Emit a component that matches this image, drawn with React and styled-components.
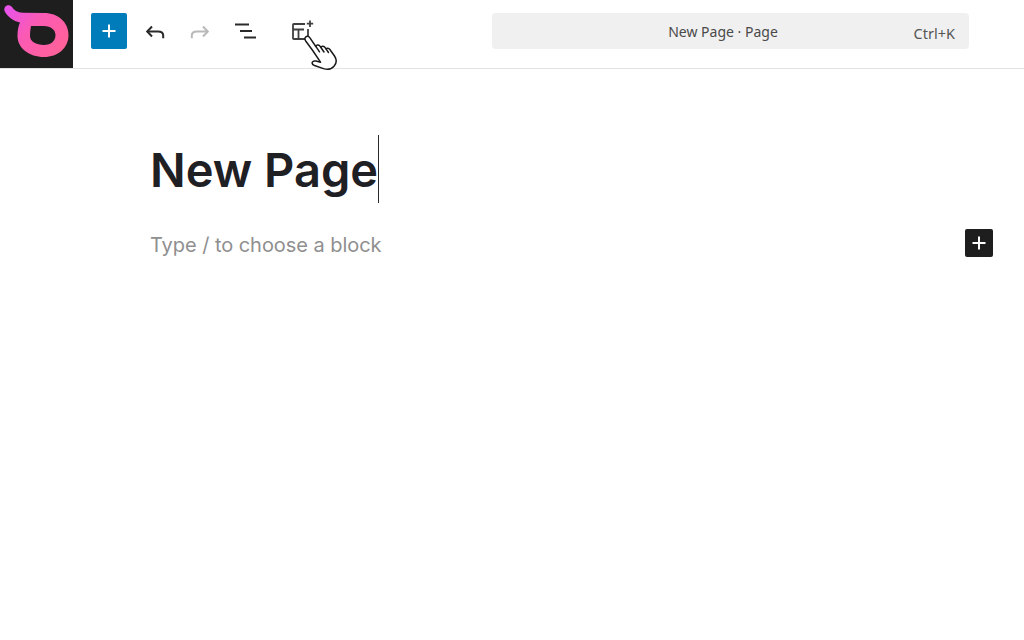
import React from 'react';
import styled, {createGlobalStyle} from 'styled-components';

const GlobalStyle = createGlobalStyle`
  html, body {
    margin: 0;
    padding: 0;
    background: #fff;
    font-family: "Inter", "Liberation Sans", sans-serif;
  }
`

const Page = styled.div`
  position: relative;
  width: 1024px;
  height: 640px;
  overflow: hidden;
  background: #fff;
`

const Toolbar = styled.header`
  display: flex;
  height: 68px;
  border-bottom: 1px solid #e2e2e2;
`

const LogoBox = styled.div`
  width: 73px;
  height: 68px;
  flex: none;
  background: #1e1e1e;
`

const Controls = styled.div`
  display: flex;
  align-items: flex-start;
  padding-top: 13px;
`

const AddButton = styled.button`
  display: flex;
  align-items: center;
  justify-content: center;
  flex: none;
  width: 36px;
  height: 36px;
  margin: 0 5px 0 18px;
  padding: 0;
  border: 0;
  border-radius: 2px;
  background: #007cba;
  color: #fff;
`

const ToolButton = styled.button`
  display: flex;
  align-items: center;
  justify-content: center;
  flex: none;
  width: 45px;
  height: 36px;
  padding: 0;
  border: 0;
  background: transparent;
  color: ${({disabled}) => disabled ? '#b9b9b9' : '#2a2a2a'};
`

const PatternButton = styled(ToolButton)`
  margin-left: 12px;
`

const Search = styled.div`
  position: relative;
  display: flex;
  align-items: center;
  justify-content: center;
  box-sizing: border-box;
  width: 477px;
  height: 36px;
  margin-left: 168px;
  padding-right: 15px;
  border-radius: 4px;
  background: #f0f0f0;
  font-family: "Noto Sans", sans-serif;
  font-size: 14px;
  color: #4a4a4a;
`

const Shortcut = styled.span`
  position: absolute;
  right: 14px;
  top: 10px;
  line-height: 20px;
  font-size: 14.500px;
  color: #555;
`

const Editor = styled.main`
  display: flex;
  flex-direction: column;
  align-items: flex-start;
  padding: 66px 31px 0 150px;
`

const Title = styled.h1`
  display: flex;
  margin: 0;
  height: 68px;
  font-size: 47px;
  line-height: 70px;
  font-weight: 600;
  color: #1f2024;
`

const Caret = styled.span`
  width: 1px;
  height: 68px;
  background: #2a2a2a;
`

const BlockRow = styled.div`
  display: flex;
  align-items: flex-start;
  justify-content: space-between;
  align-self: stretch;
  margin-top: 26px;
  height: 30px;
`

const Placeholder = styled.p`
  margin: 0;
  padding-top: 2px;
  font-size: 20px;
  line-height: 28px;
  letter-spacing: -0.05px;
  color: #8f8f8f;
`

const BlockAdd = styled.button`
  display: flex;
  align-items: center;
  justify-content: center;
  width: 28px;
  height: 28px;
  padding: 0;
  border: 0;
  border-radius: 2px;
  background: #1e1e1e;
  color: #fff;
`

const HandCursor = styled.svg`
  position: absolute;
  left: 301px;
  top: 33px;
`

const Logo = () => (
  <svg width="73" height="68" viewBox="0 0 73 68">
    <defs>
      <linearGradient id="logoPink" x1="5" y1="8" x2="60" y2="55" gradientUnits="userSpaceOnUse">
        <stop offset="0" stopColor="#e653ee"/>
        <stop offset="0.45" stopColor="#fb5ab4"/>
        <stop offset="1" stopColor="#ff6298"/>
      </linearGradient>
    </defs>
    <path fillRule="evenodd" fill="url(#logoPink)"
          d="M5 7C6.500 4.500 10 4.500 12 7C14 10 17 12.500 23 12.800L44 13C58 13 68.500 22 68.500 35C68.500 48 58 57 44 57C29 57 17.500 48 17.500 36C17.500 30 18.500 25.500 20 22.500C13 21 8 17 5 12C4 10 4 8.500 5 7Z
             M31 26L44 26C51 26 55.500 30 55.500 35C55.500 41 51 45 44 45C36 45 30 41.500 30 36C30 32 30.500 29 31 26Z"/>
  </svg>
)

const Plus = () => (
  <svg width="26" height="26" viewBox="0 0 26 26" fill="none" stroke="currentColor" strokeWidth="2">
    <path d="M13 6.500v13M6.500 13h13"/>
  </svg>
)

const Undo = () => (
  <svg width="24" height="24" viewBox="0 0 24 24" fill="none" stroke="currentColor" strokeWidth="2">
    <path d="M9 7.500L4.200 12.500L9 17.500"/>
    <path d="M4.200 12.500H15c3.500 0 5.200 1.700 5.200 4v2.700"/>
  </svg>
)

const Redo = () => (
  <svg width="24" height="24" viewBox="0 0 24 24" fill="none" stroke="currentColor" strokeWidth="2">
    <path d="M15 7.500L19.800 12.500L15 17.500"/>
    <path d="M19.800 12.500H9c-3.500 0-5.200 1.700-5.200 4v2.700"/>
  </svg>
)

const ListView = () => (
  <svg width="24" height="24" viewBox="0 0 24 24" fill="currentColor">
    <path d="M2 4.500h14v2H2zM7 11h12v2H7zM11 17.500h12v2H11z"/>
  </svg>
)

const Patterns = () => (
  <svg width="26" height="26" viewBox="0 0 26 26" fill="none" stroke="#3f3f3f" strokeWidth="1.800">
    <path d="M16 6H4.800C4.400 6 4 6.400 4 6.800V20.200c0 .4.400.8.800.8H18.200c.4 0 .8-.4.800-.8V11"/>
    <path d="M4 11.500h11M9.500 11.500V21"/>
    <path d="M21 2.500v6.500M17.800 5.700h6.400"/>
  </svg>
)

const Hand = () => (
  <HandCursor width="38" height="38" viewBox="0 0 38 38">
    <path d="M4.500 4.200C5.800 2.800 7.600 3 8.600 4.400L14.800 13.500C15.400 11.900 17.300 11.500 18.500 12.600L19.800 14.300C20.500 13 22.300 12.700 23.500 13.900L25 15.800C26 14.900 27.700 15 28.700 16.200L33.500 23C36 26.800 35.600 30.400 33 33.200C30.300 36.200 26.500 37 22.500 35.600L13.500 32.500C11.800 31.800 10.800 30.600 11.300 29.300C11.900 27.900 13.400 27.700 15 28.100L19.500 29.200L11.700 17.500L4.700 8C3.800 6.700 3.700 5.200 4.500 4.200Z"
          fill="#fff" stroke="#1a1a1a" strokeWidth="1.500" strokeLinejoin="round"/>
    <path d="M15 13.700L18.500 18.800M19.900 14.500L23 19M25 15.900L27.500 19.500" fill="none" stroke="#1a1a1a" strokeWidth="1.500" strokeLinecap="round"/>
  </HandCursor>
)

const App = () => {
  return <Page>
    <GlobalStyle/>
    <Toolbar>
      <LogoBox><Logo/></LogoBox>
      <Controls>
        <AddButton aria-label="Add block"><Plus/></AddButton>
        <ToolButton aria-label="Undo"><Undo/></ToolButton>
        <ToolButton aria-label="Redo" disabled><Redo/></ToolButton>
        <ToolButton aria-label="List view"><ListView/></ToolButton>
        <PatternButton aria-label="Patterns"><Patterns/></PatternButton>
        <Search>
          New Page · Page
          <Shortcut>Ctrl+K</Shortcut>
        </Search>
      </Controls>
    </Toolbar>
    <Hand/>
    <Editor>
      <Title>New Page<Caret/></Title>
      <BlockRow>
        <Placeholder>Type / to choose a block</Placeholder>
        <BlockAdd aria-label="Add block"><Plus/></BlockAdd>
      </BlockRow>
    </Editor>
  </Page>
}

export default App
